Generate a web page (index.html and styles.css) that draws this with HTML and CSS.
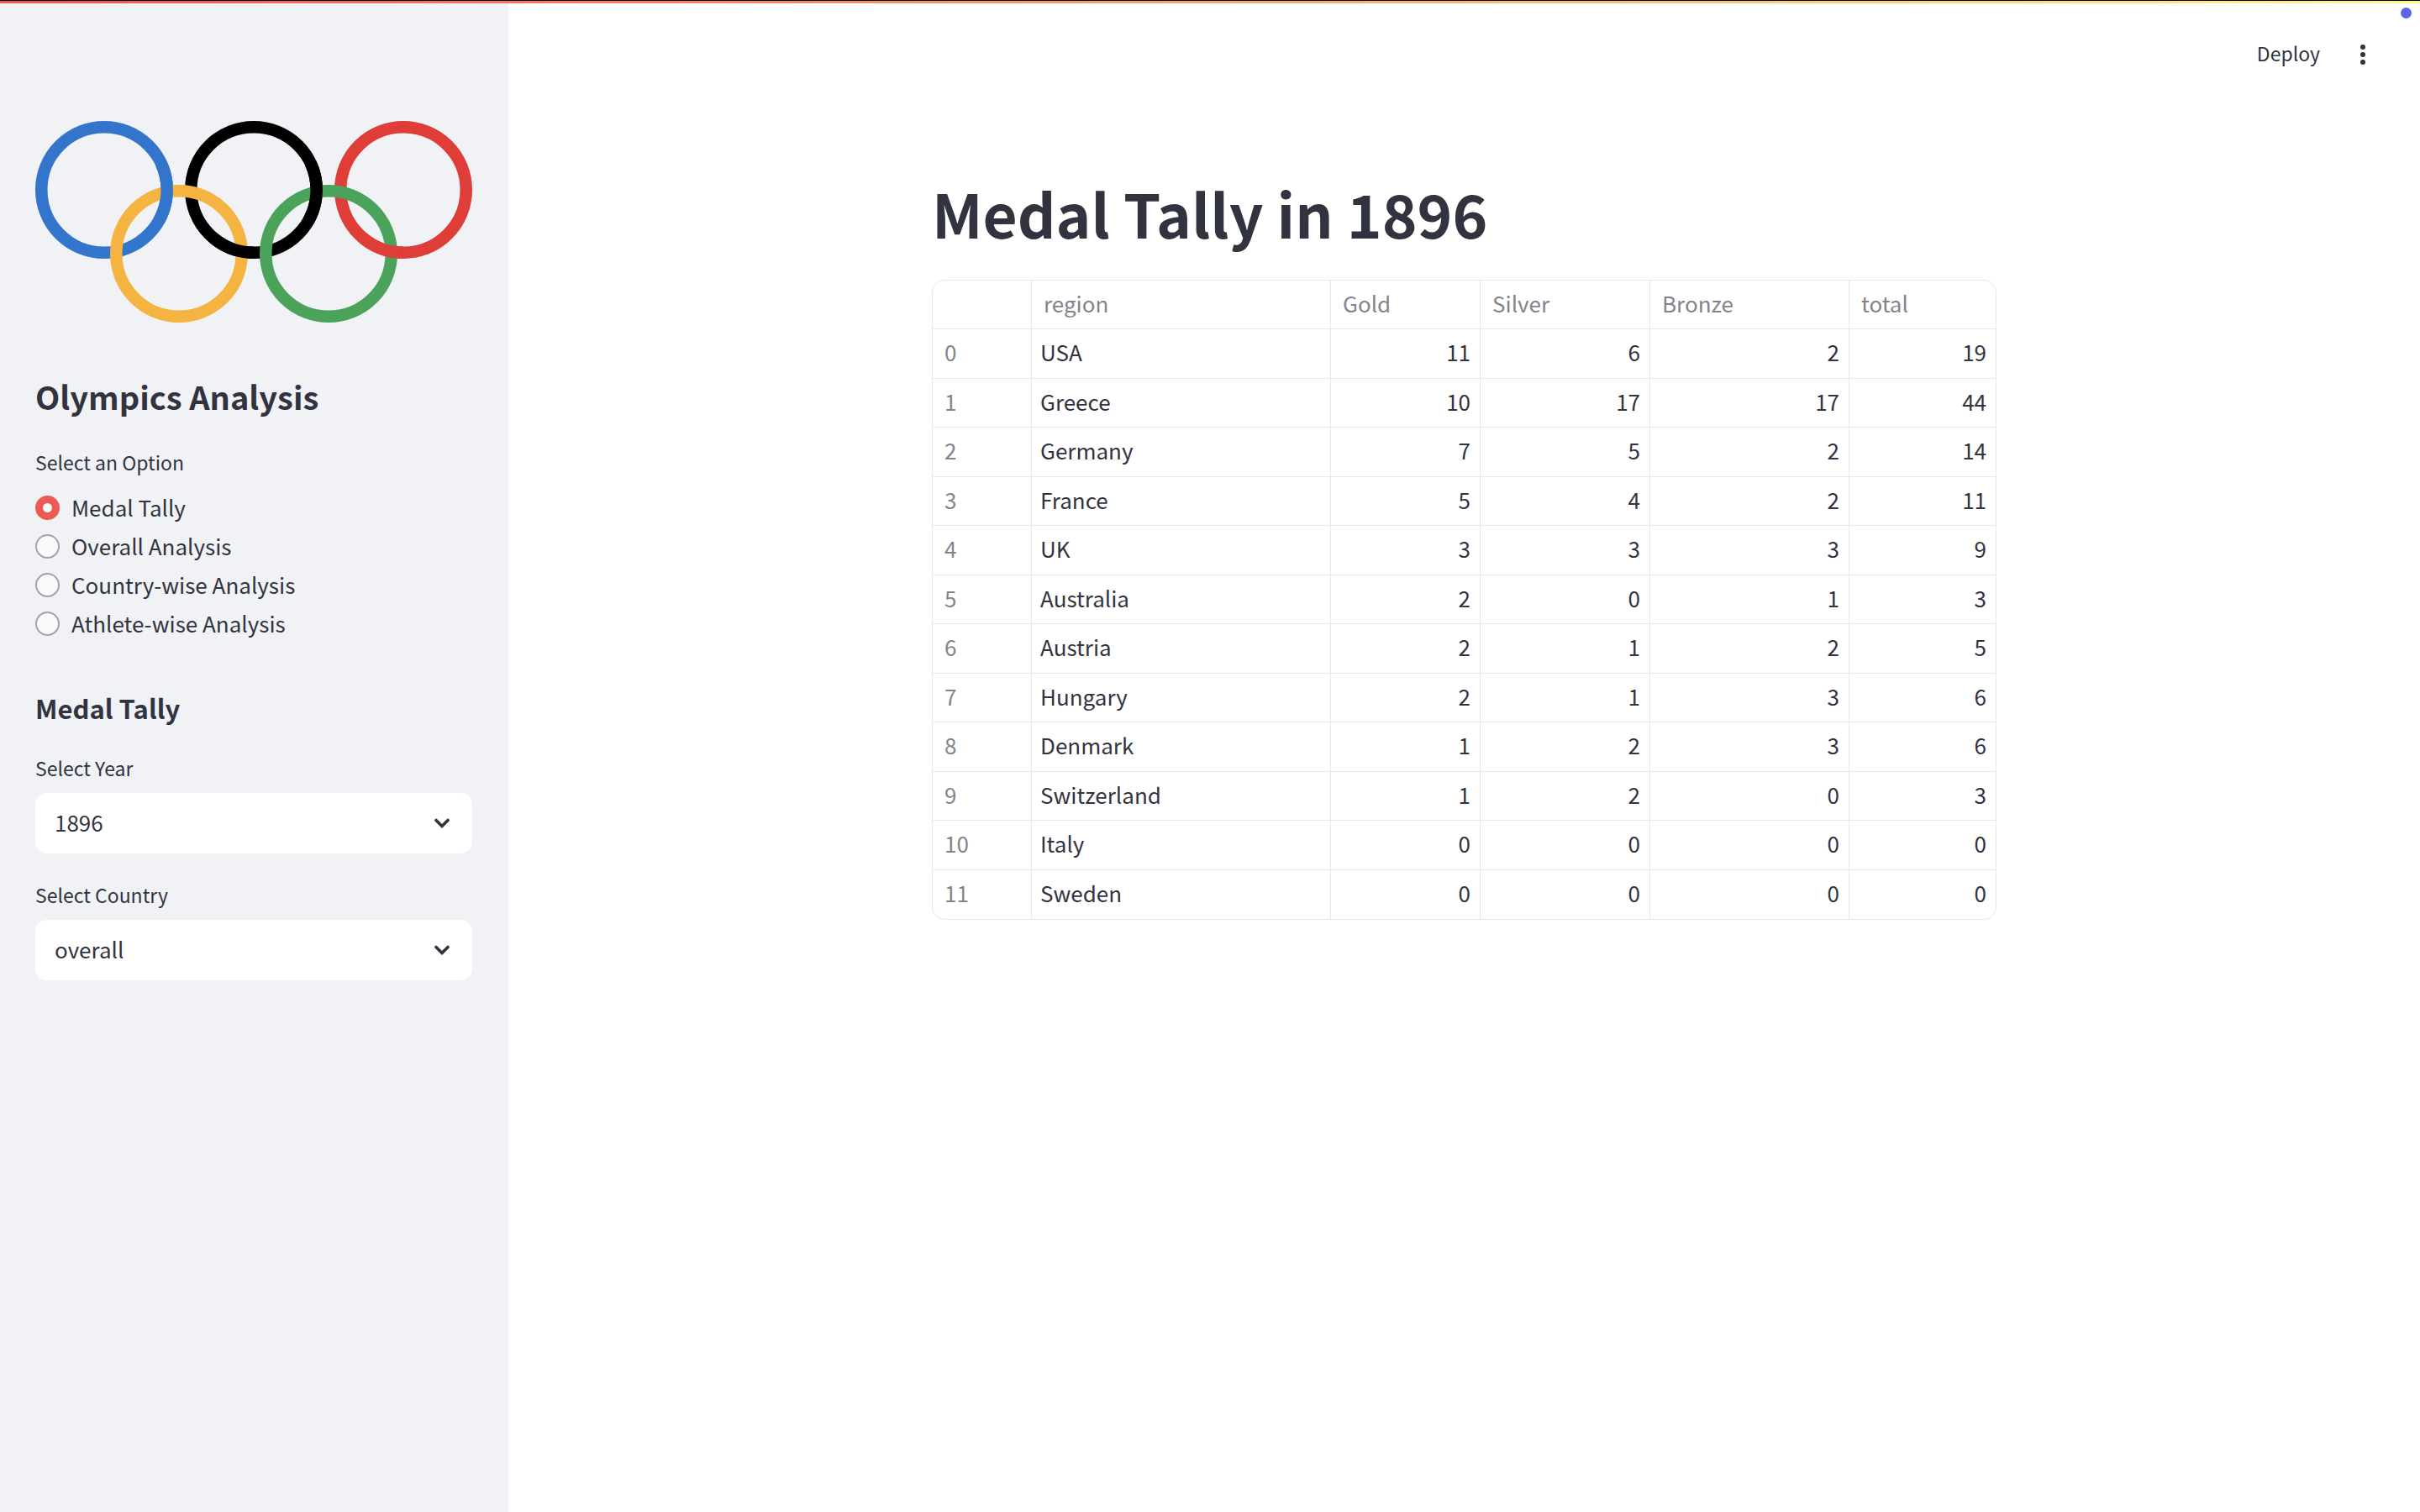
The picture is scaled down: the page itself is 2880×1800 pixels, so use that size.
FILE: index.html
```html
<!DOCTYPE html>
<html lang="en">
<head>
<meta charset="utf-8">
<title>Olympics Analysis</title>
<link rel="stylesheet" href="styles.css">
</head>
<body>
<div class="decoration"></div>
<span class="status-dot"></span>
<div class="app">
  <aside class="sidebar">
    <svg class="rings" viewBox="0 0 520 240" role="img" aria-label="Olympic rings" fill="none" stroke-width="14.5">
      <circle cx="82" cy="82" r="74.75" stroke="#3375cb"/>
      <circle cx="260" cy="82" r="74.75" stroke="#000"/>
      <circle cx="438" cy="82" r="74.75" stroke="#de3e37"/>
      <circle cx="171" cy="158" r="74.75" stroke="#f5b342"/>
      <circle cx="349" cy="158" r="74.75" stroke="#4ba35b"/>
      <path d="M149.7 50.4A74.75 74.75 0 0 1 146.7 119.4" stroke="#3375cb"/>
      <path d="M327.7 50.4A74.75 74.75 0 0 1 324.7 119.4M260 156.75A74.75 74.75 0 0 1 212 139.3" stroke="#000"/>
      <path d="M438 156.75A74.75 74.75 0 0 1 390 139.3" stroke="#de3e37"/>
    </svg>
    <h1 class="sidebar-title">Olympics Analysis</h1>
    <fieldset class="options">
      <legend class="field-label">Select an Option</legend>
      <label class="option"><input type="radio" name="menu" checked>Medal Tally</label>
      <label class="option"><input type="radio" name="menu">Overall Analysis</label>
      <label class="option"><input type="radio" name="menu">Country-wise Analysis</label>
      <label class="option"><input type="radio" name="menu">Athlete-wise Analysis</label>
    </fieldset>
    <h2 class="sidebar-subtitle">Medal Tally</h2>
    <div class="field">
      <label class="field-label" for="year">Select Year</label>
      <div class="select-box">
        <select id="year"><option>1896</option></select>
        <svg class="chevron" viewBox="0 0 18 12"><path d="M2 2.5L9 9.5L16 2.5"/></svg>
      </div>
    </div>
    <div class="field">
      <label class="field-label" for="country">Select Country</label>
      <div class="select-box">
        <select id="country"><option>overall</option></select>
        <svg class="chevron" viewBox="0 0 18 12"><path d="M2 2.5L9 9.5L16 2.5"/></svg>
      </div>
    </div>
  </aside>
  <div class="page">
    <header class="toolbar">
      <button class="deploy" type="button">Deploy</button>
      <button class="menu" type="button" aria-label="Main menu">
        <svg viewBox="0 0 6 24"><circle cx="3" cy="3" r="3"/><circle cx="3" cy="12" r="3"/><circle cx="3" cy="21" r="3"/></svg>
      </button>
    </header>
    <main class="content">
      <h1 class="title">Medal Tally in 1896</h1>
      <div class="table-frame">
        <table class="tally">
          <colgroup><col class="col-index"><col class="col-region"><col class="col-gold"><col class="col-silver"><col class="col-bronze"><col></colgroup>
          <thead><tr><th></th><th>region</th><th>Gold</th><th>Silver</th><th>Bronze</th><th>total</th></tr></thead>
          <tbody>
            <tr><th>0</th><td>USA</td><td>11</td><td>6</td><td>2</td><td>19</td></tr>
            <tr><th>1</th><td>Greece</td><td>10</td><td>17</td><td>17</td><td>44</td></tr>
            <tr><th>2</th><td>Germany</td><td>7</td><td>5</td><td>2</td><td>14</td></tr>
            <tr><th>3</th><td>France</td><td>5</td><td>4</td><td>2</td><td>11</td></tr>
            <tr><th>4</th><td>UK</td><td>3</td><td>3</td><td>3</td><td>9</td></tr>
            <tr><th>5</th><td>Australia</td><td>2</td><td>0</td><td>1</td><td>3</td></tr>
            <tr><th>6</th><td>Austria</td><td>2</td><td>1</td><td>2</td><td>5</td></tr>
            <tr><th>7</th><td>Hungary</td><td>2</td><td>1</td><td>3</td><td>6</td></tr>
            <tr><th>8</th><td>Denmark</td><td>1</td><td>2</td><td>3</td><td>6</td></tr>
            <tr><th>9</th><td>Switzerland</td><td>1</td><td>2</td><td>0</td><td>3</td></tr>
            <tr><th>10</th><td>Italy</td><td>0</td><td>0</td><td>0</td><td>0</td></tr>
            <tr><th>11</th><td>Sweden</td><td>0</td><td>0</td><td>0</td><td>0</td></tr>
          </tbody>
        </table>
      </div>
    </main>
  </div>
</div>
</body>
</html>
```
FILE: styles.css
```css
* { box-sizing: border-box; }
body {
  margin: 0;
  min-height: 100vh;
  display: flex;
  flex-direction: column;
  position: relative;
  background: #fff;
  color: #31333f;
  font-family: "Noto Sans CJK SC", "Noto Sans", sans-serif;
  font-size: 26px;
  line-height: 40px;
}
h1, h2 { margin: 0; }
button, select { font: inherit; color: inherit; border: 0; background: none; padding: 0; }

.decoration {
  height: 4px;
  border-top: 1px solid #000;
  background: linear-gradient(90deg, #ed5552, #fff689);
}
.status-dot {
  position: absolute;
  top: 9px;
  right: 10px;
  width: 13px;
  height: 13px;
  border-radius: 50%;
  background: #6161e8;
}
.app { flex: 1; display: flex; }

.sidebar {
  width: 605px;
  flex: none;
  padding: 140px 43px 40px 42px;
  background: #f0f2f6;
}
.rings { display: block; width: 100%; }
.sidebar-title {
  margin-top: 64px;
  font-size: 38px;
  font-weight: 600;
  line-height: 48px;
}
.options {
  margin: 38px 0 0;
  padding: 0;
  border: 0;
  display: flex;
  flex-direction: column;
}
.field-label {
  display: block;
  padding: 0;
  font-size: 23px;
  line-height: 32px;
}
.options .field-label { margin-bottom: 15px; }
.option {
  display: flex;
  align-items: center;
  gap: 14px;
  height: 46px;
}
.option input {
  appearance: none;
  width: 29px;
  height: 29px;
  margin: 0;
  border: 2px solid #a3a4aa;
  border-radius: 50%;
  background: #f9fafc;
}
.option input:checked {
  border: 9px solid #ed5a53;
}
.sidebar-subtitle {
  margin-top: 56px;
  font-size: 31px;
  font-weight: 600;
  line-height: 44px;
}
.field { margin-top: 33px; }
.field .field-label { margin-bottom: 14px; }
.select-box { display: grid; align-items: center; }
.select-box > * { grid-area: 1 / 1; }
.select-box select {
  appearance: none;
  width: 100%;
  height: 72px;
  padding: 0 23px 2px;
  border-radius: 14px;
  background: #fff;
}
.chevron {
  justify-self: end;
  width: 18px;
  height: 12px;
  margin-right: 27px;
  fill: none;
  stroke: #31333f;
  stroke-width: 3.6;
  stroke-linecap: round;
  pointer-events: none;
}

.page { flex: 1; min-width: 0; }
.toolbar {
  display: flex;
  justify-content: flex-end;
  align-items: center;
  gap: 48px;
  height: 122px;
  padding-right: 65px;
}
.deploy { font-size: 23px; line-height: 32px; padding-bottom: 5px; }
.menu { display: flex; }
.menu svg { width: 6px; height: 24px; fill: #31333f; }

.content {
  max-width: 1267px;
  margin: 0 auto;
  padding: 83px 0 64px;
}
.title {
  font-size: 71px;
  font-weight: 700;
  line-height: 88px;
}
.table-frame {
  margin-top: 36px;
  border: 1px solid #e8e8ea;
  border-radius: 15px;
  overflow: hidden;
}
.tally {
  width: 100%;
  table-layout: fixed;
  border-collapse: separate;
  border-spacing: 0;
}
.col-index { width: 118px; }
.col-region { width: 356px; }
.col-gold { width: 178px; }
.col-silver { width: 202px; }
.col-bronze { width: 237px; }
.tally th, .tally td {
  height: 58px;
  padding: 0 11px 4px 10px;
  border: 0 solid #e8e8ea;
  border-width: 0 1px 1px 0;
  text-align: right;
}
.tally th {
  padding: 0 14px 4px;
  color: #83848b;
  font-weight: 400;
  text-align: left;
}
.tally td:nth-child(2) { text-align: left; }
.tally tbody tr:nth-child(odd) > * { height: 59px; }
.tally tr > :last-child { border-right: 0; }
.tally tbody tr:last-child > * { border-bottom: 0; }
```
